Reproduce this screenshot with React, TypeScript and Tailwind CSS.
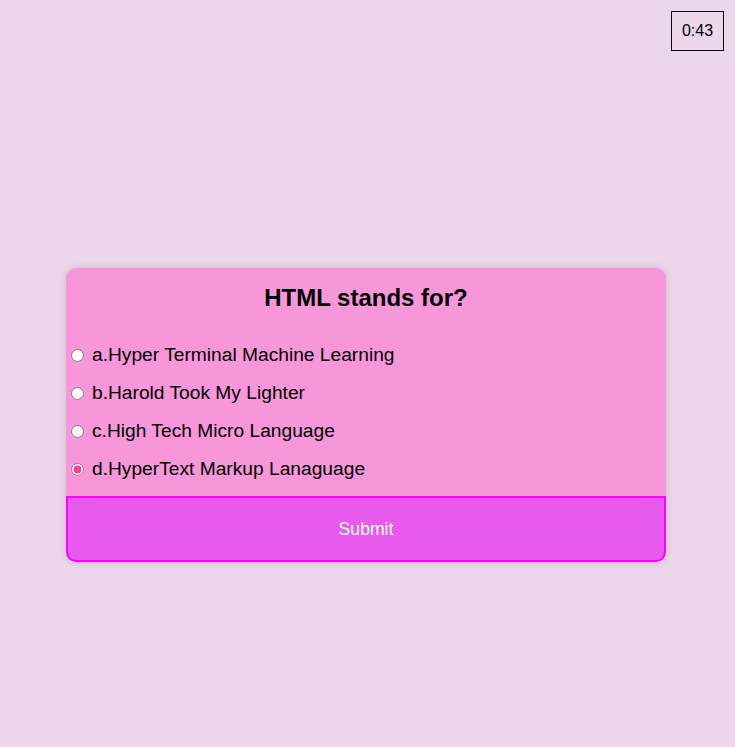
import React from "react";

const options = [
  "a.Hyper Terminal Machine Learning",
  "b.Harold Took My Lighter",
  "c.High Tech Micro Language",
  "d.HyperText Markup Lanaguage",
];

export default function App() {
  return (
    <div
      className="relative min-h-[747px] w-full bg-[#ecd6ea] text-black"
      style={{ fontFamily: '"Liberation Sans", Arial, sans-serif' }}
    >
      <div className="absolute right-[11px] top-[11px] flex h-[40px] w-[53px] items-center justify-center border border-black text-[16px]">
        0:43
      </div>
      <div className="pl-[66px] pt-[268px]">
        <div className="w-[600px] rounded-[10px] bg-[#f797da] shadow-[0_0_8px_rgba(0,0,0,0.12)]">
          <h2 className="pt-[16px] pb-[24px] text-center text-[24px] font-bold leading-[28px]">
            HTML stands for?
          </h2>
          <div className="flex flex-col pb-[8px]">
            {options.map((opt, i) => (
              <label
                key={opt}
                className="flex h-[38px] items-center text-[19.2px]"
              >
                <input
                  type="radio"
                  name="answer"
                  defaultChecked={i === 3}
                  className="ml-[5px] mr-[8px] h-[13px] w-[13px] shrink-0 accent-[#e8458c]"
                />
                {opt}
              </label>
            ))}
          </div>
          <button className="flex h-[66px] w-full items-center justify-center rounded-b-[10px] border-2 border-[#ff00ff] bg-[#e859ed] text-[17.6px] text-white">
            Submit
          </button>
        </div>
      </div>
    </div>
  );
}
